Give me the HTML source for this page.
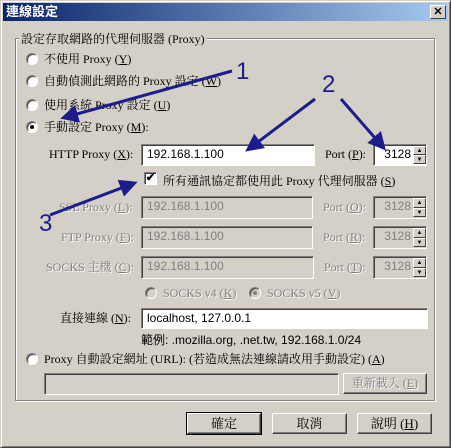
<!DOCTYPE html>
<html><head><meta charset="utf-8"><style>
*{margin:0;padding:0;box-sizing:border-box}
body{width:451px;height:448px;background:#d4d0c8;position:relative;overflow:hidden;font-family:"Liberation Serif","Noto Serif CJK TC",serif;font-size:12px;color:#000}
.a{position:absolute;white-space:nowrap;line-height:14px}
.win{position:absolute;left:0;top:0;width:451px;height:448px;border:1px solid;border-color:#d4d0c8 #404040 #404040 #d4d0c8;box-shadow:inset 1px 1px #fff,inset -1px -1px #808080}
.title{position:absolute;left:3px;top:3px;width:445px;height:18px;background:linear-gradient(90deg,#0a246a,#a6caf0);color:#fff;font-weight:bold;font-family:"Liberation Sans","Noto Sans CJK TC",sans-serif;font-size:13px;line-height:18px;padding-left:3px}
.close{position:absolute;left:430px;top:5px;width:16px;height:14px;background:#d4d0c8;border:1px solid;border-color:#fff #404040 #404040 #fff;font:bold 11px "Liberation Sans",sans-serif;text-align:center;line-height:12px;color:#000}
.grp{position:absolute;left:15px;top:38px;width:420px;height:363px;border:1px solid #808080;box-shadow:1px 1px #fff,inset 1px 1px #fff}
.in{position:absolute;background:#fff;border:1px solid;border-color:#808080 #fff #fff #808080;box-shadow:inset 1px 1px #404040;font-family:"Liberation Sans",sans-serif;font-size:12px;line-height:18px;padding-left:5px}
.dis{background:#d4d0c8;color:#808080}
.r{position:absolute;width:12px;height:12px;border-radius:50%;background:#fff;border:1px solid;border-color:#808080 #fff #fff #808080;box-shadow:inset 1px 1px #404040}
.r.d{background:#d4d0c8}
.dot::after{content:"";position:absolute;left:3px;top:3px;width:4px;height:4px;border-radius:50%;background:#000}
.r.d.dot::after{background:#808080}
.g{color:#808080;text-shadow:1px 1px #fff}
.sp{position:absolute;width:13px;background:#d4d0c8}
.sp div{height:50%;border:1px solid;border-color:#fff #404040 #404040 #fff;font-size:6px;text-align:center;line-height:8px;color:#000}
.btn{position:absolute;height:21px;border:1px solid;border-color:#fff #404040 #404040 #fff;box-shadow:inset -1px -1px #808080;text-align:center;line-height:19px;font-size:13px}
.def{outline:1px solid #000}
u{text-decoration:underline}
</style></head><body>
<div class="win"></div>
<div class="title">連線設定</div>
<div class="close">✕</div>
<div class="grp"></div>
<div class="a" style="left:19px;top:32px;background:#d4d0c8;padding:0 2px">設定存取網路的代理伺服器 (Proxy)</div>

<div class="r" style="left:26px;top:53px"></div><div class="a" style="left:44px;top:52px">不使用 Proxy (<u>Y</u>)</div>
<div class="r" style="left:26px;top:75px"></div><div class="a" style="left:44px;top:74px">自動偵測此網路的 Proxy 設定 (<u>W</u>)</div>
<div class="r" style="left:26px;top:99px"></div><div class="a" style="left:44px;top:98px">使用系統 Proxy 設定 (<u>U</u>)</div>
<div class="r dot" style="left:26px;top:121px"></div><div class="a" style="left:44px;top:120px">手動設定 Proxy (<u>M</u>):</div>

<div class="a" style="left:49px;top:147px">HTTP Proxy (<u>X</u>):</div>
<div class="in" style="left:141px;top:144px;width:174px;height:22px">192.168.1.100</div>
<div class="a" style="left:325px;top:147px">Port (<u>P</u>):</div>
<div class="in" style="left:373px;top:144px;width:54px;height:22px;text-align:right;padding-right:15px">3128</div>
<div class="sp" style="left:413px;top:146px;height:18px"><div>▲</div><div>▼</div></div>

<div class="in" style="left:144px;top:172px;width:13px;height:13px;padding:0;font-size:11px;line-height:11px;text-align:center;font-weight:bold">✔</div>
<div class="a" style="left:163px;top:174px">所有通訊協定都使用此 Proxy 代理伺服器 (<u>S</u>)</div>

<div class="a g" style="left:59px;top:200px">SSL Proxy (<u>L</u>):</div>
<div class="in dis" style="left:141px;top:196px;width:172px;height:23px">192.168.1.100</div>
<div class="a g" style="left:323px;top:200px">Port (<u>O</u>):</div>
<div class="in dis" style="left:373px;top:196px;width:54px;height:23px;text-align:right;padding-right:15px">3128</div>
<div class="sp" style="left:413px;top:198px;height:19px"><div>▲</div><div>▼</div></div>

<div class="a g" style="left:61px;top:230px">FTP Proxy (<u>F</u>):</div>
<div class="in dis" style="left:141px;top:226px;width:172px;height:23px">192.168.1.100</div>
<div class="a g" style="left:323px;top:230px">Port (<u>R</u>):</div>
<div class="in dis" style="left:373px;top:226px;width:54px;height:23px;text-align:right;padding-right:15px">3128</div>
<div class="sp" style="left:413px;top:228px;height:19px"><div>▲</div><div>▼</div></div>

<div class="a g" style="left:46px;top:260px">SOCKS 主機 (<u>C</u>):</div>
<div class="in dis" style="left:141px;top:256px;width:173px;height:23px">192.168.1.100</div>
<div class="a g" style="left:324px;top:260px">Port (<u>T</u>):</div>
<div class="in dis" style="left:373px;top:256px;width:54px;height:23px;text-align:right;padding-right:15px">3128</div>
<div class="sp" style="left:413px;top:258px;height:19px"><div>▲</div><div>▼</div></div>

<div class="r d" style="left:145px;top:287px"></div><div class="a g" style="left:163px;top:286px">SOCKS v4 (<u>K</u>)</div>
<div class="r d dot" style="left:249px;top:287px"></div><div class="a g" style="left:267px;top:286px">SOCKS v5 (<u>V</u>)</div>

<div class="a" style="left:60px;top:311px">直接連線 (<u>N</u>):</div>
<div class="in" style="left:141px;top:308px;width:287px;height:21px">localhost, 127.0.0.1</div>
<div class="a" style="left:141px;top:333px;font-family:'Liberation Sans','Noto Sans CJK TC',sans-serif">範例: .mozilla.org, .net.tw, 192.168.1.0/24</div>

<div class="r" style="left:26px;top:353px"></div><div class="a" style="left:44px;top:352px">Proxy 自動設定網址 (URL): (若造成無法連線請改用手動設定) (<u>A</u>)</div>
<div class="in dis" style="left:44px;top:373px;width:295px;height:22px"></div>
<div class="btn g" style="left:343px;top:373px;width:84px;height:21px;font-size:12px">重新載入 (<u>E</u>)</div>

<div class="btn def" style="left:187px;top:413px;width:74px">確定</div>
<div class="btn" style="left:272px;top:413px;width:75px">取消</div>
<div class="btn" style="left:357px;top:413px;width:75px">說明 (<u>H</u>)</div>

<svg style="position:absolute;left:0;top:0" width="451" height="448">
<defs><marker id="m" markerWidth="6" markerHeight="6" refX="4" refY="3" orient="auto"><path d="M0,0 L6,3 L0,6 Z" fill="#1c1c8c"/></marker></defs>
<g stroke="#1c1c8c" stroke-width="3" fill="none" marker-end="url(#m)">
<line x1="232" y1="71" x2="66" y2="117"/>
<line x1="315" y1="99" x2="250" y2="148"/>
<line x1="341" y1="99" x2="382" y2="146"/>
<line x1="50" y1="215" x2="132" y2="184"/>
</g>
<g fill="#1c1c8c" font-family="Liberation Sans,sans-serif" font-size="24">
<text x="236" y="79">1</text><text x="322" y="92">2</text><text x="39" y="231">3</text>
</g>
</svg>
</body></html>
